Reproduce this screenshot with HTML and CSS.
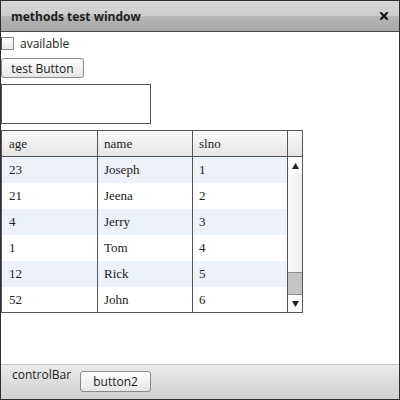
FILE: index.html
```html
<!DOCTYPE html>
<html>
<head>
<meta charset="utf-8">
<link rel="stylesheet" href="styles.css">
</head>
<body>
<div class="window">
  <div class="titlebar">
    <span class="title">methods test window</span>
    <svg class="close" width="8" height="8" viewBox="0 0 8 8"><path d="M1 1 L7 7 M7 1 L1 7" stroke="#111" stroke-width="2.2" stroke-linecap="square"/></svg>
  </div>
  <div class="content">
    <label class="check-row"><span class="checkbox"></span><span class="check-label">available</span></label>
    <button class="btn test-btn">test Button</button>
    <div class="textbox"></div>
    <div class="grid">
      <div class="grid-main">
        <div class="row head"><div class="cell">age</div><div class="cell">name</div><div class="cell">slno</div></div>
        <div class="row alt"><div class="cell">23</div><div class="cell">Joseph</div><div class="cell">1</div></div>
        <div class="row"><div class="cell">21</div><div class="cell">Jeena</div><div class="cell">2</div></div>
        <div class="row alt"><div class="cell">4</div><div class="cell">Jerry</div><div class="cell">3</div></div>
        <div class="row"><div class="cell">1</div><div class="cell">Tom</div><div class="cell">4</div></div>
        <div class="row alt"><div class="cell">12</div><div class="cell">Rick</div><div class="cell">5</div></div>
        <div class="row"><div class="cell">52</div><div class="cell">John</div><div class="cell">6</div></div>
      </div>
      <div class="scroll-col">
        <div class="scroll-head"></div>
        <div class="scrollbar">
          <div class="sb-btn"><svg width="7" height="6" viewBox="0 0 7 6"><path d="M3.5 0 L7 6 L0 6 Z" fill="#222"/></svg></div>
          <div class="sb-track"></div>
          <div class="sb-thumb"></div>
          <div class="sb-btn"><svg width="7" height="6" viewBox="0 0 7 6"><path d="M0 0 L7 0 L3.5 6 Z" fill="#222"/></svg></div>
        </div>
      </div>
    </div>
  </div>
  <div class="controlbar">
    <span class="cb-label">controlBar</span>
    <button class="btn cb-btn">button2</button>
  </div>
</div>
</body>
</html>
```
FILE: styles.css
```css
html, body { margin: 0; padding: 0; background: #fff; }
.window {
  width: 400px; height: 400px; box-sizing: border-box;
  border: 1px solid #2e2e2e;
  display: flex; flex-direction: column;
  font-family: "Open Sans", "DejaVu Sans", sans-serif;
  font-size: 12px; color: #222;
  overflow: hidden;
}
.titlebar {
  height: 30px; flex: none;
  border-bottom: 1px solid #444;
  background: linear-gradient(#d8d8d8 0%, #cdcdcd 48%, #b6b6b6 52%, #a6a6a6 100%);
  display: flex; align-items: center; justify-content: space-between;
  padding: 0 11px 0 10px;
}
.title { font-weight: bold; font-size: 12px; color: #1e1e1e; }
.close { display: block; margin-bottom: 1px; }
.content { flex: 1; display: flex; flex-direction: column; align-items: flex-start; }
.check-row { display: flex; align-items: center; margin-top: 4px; height: 14px; }
.checkbox {
  width: 11px; height: 11px; border: 1px solid #888; border-left-color: #555;
  background: linear-gradient(#fff, #eaeaea);
}
.check-label { margin-left: 6px; font-size: 12px; color: #222; }
.btn {
  font-family: "Open Sans", "DejaVu Sans", sans-serif; font-size: 12px; color: #222;
  border: 1px solid #8a8a8a; border-radius: 3px;
  background: linear-gradient(#fdfdfd, #e6e6e6);
  padding: 0; margin: 0;
}
.test-btn { width: 83px; height: 20px; margin-top: 8px; }
.textbox {
  width: 150px; height: 40px; box-sizing: border-box; margin-top: 6px;
  border: 1px solid #555; background: #fff;
}
.grid {
  margin-top: 6px; width: 302px; height: 183px; box-sizing: border-box;
  border: 1px solid #555; display: flex;
  font-family: "Liberation Serif", "Times New Roman", serif; font-size: 13px; color: #222;
}
.grid-main { width: 286px; }
.row { display: grid; grid-template-columns: 96px 95px 95px; height: 26px; }
.row.alt { background: #edf2fa; }
.cell { border-right: 1px solid #555; padding-left: 7px; display: flex; align-items: center; }
.row .cell + .cell { padding-left: 6px; }
.row.head { background: linear-gradient(#fafafa, #e4e4e4); }
.row.head .cell { border-bottom: 1px solid #555; height: 25px; }
.scroll-col { width: 14px; display: flex; flex-direction: column; }
.scroll-head { height: 25px; border-bottom: 1px solid #555; background: linear-gradient(#fafafa, #e4e4e4); }
.scrollbar { flex: 1; display: flex; flex-direction: column; background: #f3f3f3; }
.sb-btn { height: 17px; display: flex; align-items: center; justify-content: center; background: #fcfcfc; }
.sb-track { flex: 1; background: linear-gradient(90deg, #fafafa, #eeeeee); }
.sb-thumb { height: 21px; background: #c4c4c4; border-top: 1px solid #8c8c8c; border-bottom: 1px solid #8c8c8c; }
.controlbar {
  height: 35px; flex: none; border-top: 1px solid #c4c4c4;
  background: linear-gradient(#ebebeb, #cfcfcf);
  display: flex; align-items: flex-start; padding-left: 11px; padding-top: 1px; box-sizing: border-box;
}
.cb-label { font-size: 12px; color: #222; }
.cb-btn { width: 71px; height: 21px; margin-left: 9px; margin-top: 5px; }
```
